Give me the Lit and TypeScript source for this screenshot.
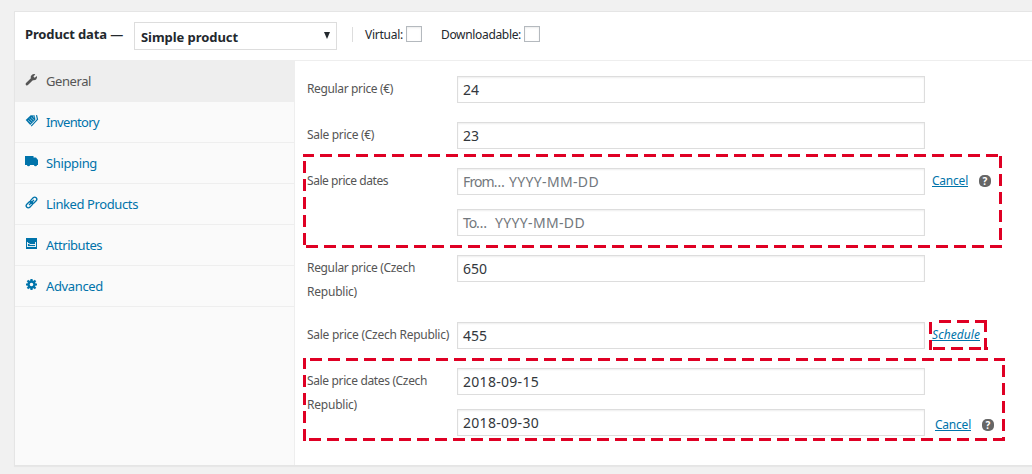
import { LitElement, html, svg, css } from "lit";
import { customElement } from "lit/decorators.js";

interface Dash { w: number; h: number; x: number; y: number; lines: [string, number][]; }

const tabs = [
  ["General", svg`<path d="M1.500 10.500 6.600 5.600" stroke="currentColor" stroke-width="2.800" stroke-linecap="round"/><path d="M11.400 2.400 9.200 4.300 7.900 3.200 9.800 .8Q7.800.1 6 1.700 4.800 2.900 5.300 4.700L7.300 6.700Q9.200 7.100 10.600 6 12 4.300 11.400 2.400Z" fill="currentColor"/>`],
  ["Inventory", svg`<path d="M.2 5.500 5.200.700 9.400 .9 9.900 5.300 4.700 10.600Z" fill="currentColor"/><path d="M11 .6 12 4.900 5.700 11.600" fill="none" stroke="currentColor" stroke-width="1.200"/><path d="M2.500 5.700 5.500 8.500M4 4.300 7 7.100M5.500 2.900 8.500 5.700" stroke="#fafafa" stroke-width=".5"/><circle cx="8.400" cy="2.300" r=".6" fill="#fafafa"/>`],
  ["Shipping", svg`<path d="M-.5.500H8V2H10.500L12.500 4.500V9.500H11.500A1.500 1.200 0 0 1 8.500 9.500H4.500A1.500 1.200 0 0 1 1.500 9.500H-.5Z" fill="currentColor"/>`],
  ["Linked Products", svg`<g fill="none" stroke="currentColor" stroke-width="1.300" transform="rotate(-45 6 6)"><rect x="-.6" y="3.900" width="7.400" height="4.200" rx="2.100"/><rect x="5.200" y="3.900" width="7.400" height="4.200" rx="2.100"/><path d="M2.500 6H9.500"/></g>`],
  ["Attributes", svg`<path d="M.5.500H11.500V11.500H.500Z" fill="currentColor"/><path d="M2 4.500V9.500M10 4.500V9.500M2 6H4M4 7H10M2 9H10" fill="none" stroke="#fafafa" stroke-width=".9"/>`],
  ["Advanced", svg`<circle cx="6" cy="6" r="3" fill="none" stroke="currentColor" stroke-width="2.400"/><path d="M6 .5V2.500M6 9.500V11.500M.5 6H2.500M9.500 6H11.500M2 2 3.500 3.500M8.500 8.500 10 10M10 2 8.500 3.500M3.500 8.500 2 10" stroke="currentColor" stroke-width="2.200"/>`],
] as const;

const frames: Dash[] = [
  { x: 303, y: 154, w: 699, h: 94, lines: [["M0 1.500H696", 1], ["M1.500 7V91", 0], ["M697.500 2V87", 0], ["M3 92.500H699", 0]] },
  { x: 929, y: 320, w: 59, h: 30, lines: [["M10 1.500H58", 0], ["M1.500 2V30", 0], ["M56.500 0V30", 0], ["M4 28.500H59", 0]] },
  { x: 303, y: 358, w: 702, h: 83, lines: [["M7 1.500H702", 0], ["M1.500 0V83", 1], ["M700.500 7V83", 0], ["M6 81.500H702", 0]] },
];

@customElement("app-root")
export class AppRoot extends LitElement {
  static styles = css`
    :host { display: block; position: relative; box-sizing: border-box; width: 1032px; height: 474px; padding: 11px 0 0 14px; overflow: hidden; background: #f1f1f1; font-family: "Noto Sans", "Open Sans", sans-serif; font-size: 12px; color: #23282d; }
    * { box-sizing: border-box; }
    .panel { height: 455px; border: 1px solid #e5e5e5; border-right: 0; background: #fff; box-shadow: 0 1px 1px rgba(0,0,0,.04); display: flex; flex-direction: column; }
    header { height: 49px; flex: none; border-bottom: 1px solid #eee; display: flex; align-items: center; padding: 0 0 4px 10px; }
    .title { font-weight: 700; font-size: 13px; width: 109px; white-space: nowrap; }
    .select { width: 203px; height: 28px; margin-top: 4px; border: 1px solid #ddd; display: flex; align-items: center; justify-content: space-between; padding: 2px 6px 0 6px; font-weight: 700; font-size: 13px; }
    .arrow { width: 6px; height: 7px; margin-top: -3px; }
    .sep { width: 1px; height: 15px; background: #ddd; margin: 0 12px 0 15px; }
    .opt { display: flex; align-items: center; white-space: nowrap; }
    .virtual { width: 57px; margin-right: 19px; }
    .check { width: 16px; height: 16px; flex: none; border: 1px solid #b4b9be; margin-left: auto; box-shadow: inset 0 1px 2px rgba(0,0,0,.08); }
    .down { width: 99px; }
    .main { flex: 1; display: flex; min-height: 0; }
    nav { width: 280px; background: #fafafa; border-right: 1px solid #eee; }
    .tab { height: 41px; border-bottom: 1px solid #eee; display: flex; align-items: center; padding: 0 0 1px 10px; color: #0073aa; font-size: 13px; }
    .tab svg { width: 13px; height: 13px; margin: -2px 8px 0 0; overflow: visible; }
    .active { background: #eee; color: #555; }
    form { flex: 1; padding: 15px 0 0 12px; }
    .row { display: flex; height: 46px; line-height: 24px; color: #555; }
    .dates { height: 87px; }
    .wrap { height: 67px; }
    .label { width: 150px; padding-top: 1px; white-space: pre; }
    .fields { display: flex; flex-direction: column; gap: 14px; }
    .input { width: 468px; height: 27px; border: 1px solid #ddd; box-shadow: inset 0 1px 2px rgba(0,0,0,.07); color: #32373c; font-size: 14px; line-height: 25px; padding-left: 5px; display: flex; white-space: pre; }
    .ph { color: #72777c; gap: 5px; }
    .to { gap: 9px; }
    .text { display: inline-block; white-space: pre; }
    .actions { display: flex; margin-left: 7px; height: 24px; }
    .low { margin: 44px 0 0 10px; }
    .link { color: #0073aa; width: 47px; padding-top: 1px; }
    .link .text { text-decoration: underline; }
    .it { font-style: italic; }
    .help { width: 12px; height: 12px; border-radius: 5px; background: #666; color: #fff; font-weight: 700; font-size: 10px; line-height: 12px; text-align: center; margin-top: 7px; }
    .frame { position: absolute; pointer-events: none; fill: none; stroke: #df0024; stroke-width: 3; }
  `;

  updated() {
    this.fit();
    document.fonts.ready.then(() => this.fit());
  }

  fit() {
    this.renderRoot.querySelectorAll<HTMLElement>(".text").forEach((el) => {
      el.style.letterSpacing = "0px";
      const gap = (Number(el.dataset.w) - el.getBoundingClientRect().width) / (el.textContent ?? "x").length;
      el.style.letterSpacing = `${gap}px`;
    });
  }

  t(s: string, w: number) { return html`<span class="text" data-w=${w}>${s}</span>`; }
  input(s: string, w: number) { return html`<div class="input">${this.t(s, w)}</div>`; }
  hint(s: string, w: number, kind = "") { return html`<div class="input ph ${kind}">${this.t(s, w)}${this.t("YYYY-MM-DD", 90)}</div>`; }
  cancel(low = false) { return html`<div class="actions ${low ? "low" : ""}"><span class="link">${this.t("Cancel", 36)}</span><span class="help">?</span></div>`; }

  render() {
    const widths = [45, 53, 51, 92, 56, 57];
    return html`
      <div class="panel">
        <header>
          <span class="title">${this.t("Product data —", 98)}</span>
          <div class="select">${this.t("Simple product", 97)}<svg class="arrow" viewBox="0 0 6 7" preserveAspectRatio="none"><path d="M0 0H6L3 7Z" fill="#23282d"/></svg></div>
          <span class="sep"></span>
          <label class="opt virtual">${this.t("Virtual:", 38)}<span class="check"></span></label>
          <label class="opt down">${this.t("Downloadable:", 80)}<span class="check"></span></label>
        </header>
        <div class="main">
          <nav>${tabs.map(([name, icon], i) => html`<div class="tab ${i ? "" : "active"}"><svg viewBox="-.5 -.5 13 13">${icon}</svg>${this.t(name, widths[i])}</div>`)}</nav>
          <form>
            <div class="row"><span class="label">${this.t("Regular price (€)", 86)}</span>${this.input("24", 16)}</div>
            <div class="row"><span class="label">${this.t("Sale price (€)", 67)}</span>${this.input("23", 16)}</div>
            <div class="row dates"><span class="label">${this.t("Sale price dates", 81)}</span><div class="fields">${this.hint("From…", 41)}${this.hint("To…", 23, "to")}</div>${this.cancel()}</div>
            <div class="row wrap"><span class="label">${this.t("Regular price (Czech", 108)}<br>${this.t("Republic)", 50)}</span>${this.input("650", 24)}</div>
            <div class="row"><span class="label">${this.t("Sale price (Czech Republic)", 142)}</span>${this.input("455", 24)}<div class="actions"><span class="link it">${this.t("Schedule", 48)}</span></div></div>
            <div class="row dates"><span class="label">${this.t("Sale price dates (Czech", 120)}<br>${this.t("Republic)", 50)}</span><div class="fields">${this.input("2018-09-15", 76)}${this.input("2018-09-30", 76)}</div>${this.cancel(true)}</div>
          </form>
        </div>
      </div>
      ${frames.map((f) => html`<svg class="frame" style="left:${f.x}px;top:${f.y}px" width=${f.w} height=${f.h}>${f.lines.map(([d, o]) => svg`<path d=${d} stroke-dasharray="12 6" stroke-dashoffset=${o}/>`)}</svg>`)}
    `;
  }
}
